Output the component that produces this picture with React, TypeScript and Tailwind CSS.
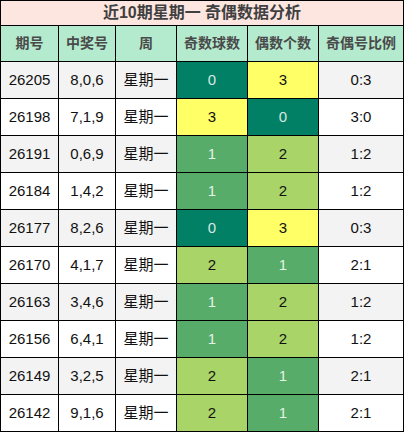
const rows = [
  ['26205', '8,0,6', 0, 3],
  ['26198', '7,1,9', 3, 0],
  ['26191', '0,6,9', 1, 2],
  ['26184', '1,4,2', 1, 2],
  ['26177', '8,2,6', 0, 3],
  ['26170', '4,1,7', 2, 1],
  ['26163', '3,4,6', 1, 2],
  ['26156', '6,4,1', 1, 2],
  ['26149', '3,2,5', 2, 1],
  ['26142', '9,1,6', 2, 1],
] as const;

// colour per count value
const cellColor: Record<number, string> = {
  0: 'bg-[#018066] text-[#d8e8e0]',
  1: 'bg-[#56ac68] text-[#e6f0e6]',
  2: 'bg-[#a9d468] text-[#111]',
  3: 'bg-[#ffff66] text-[#111]',
};

const headers = ['期号', '中奖号', '周', '奇数球数', '偶数个数', '奇偶号比例'];

const App = () => {
  return (
    <div
      className="w-[404px] h-[432px] bg-black p-px grid gap-px grid-cols-[57px_56px_60px_70px_70px_84px] grid-rows-[24px_35px_repeat(10,36px)]"
      style={{ fontFamily: '"Liberation Sans", Arial, "Noto Sans CJK SC", sans-serif' }}
    >
      <div className="col-span-6 bg-[#fde6e0] flex items-center justify-center text-[16px] font-bold text-[#404040]">
        近10期星期一 奇偶数据分析
      </div>
      {headers.map((h) => (
        <div
          key={h}
          className="bg-[#b4ebce] flex items-center justify-center text-[14px] font-bold text-[#4a4a4a]"
        >
          {h}
        </div>
      ))}
      {rows.map(([issue, nums, odd, even], i) => {
        const bg = i % 2 === 0 ? 'bg-[#f3f3f3]' : 'bg-white';
        return [
          <div key={issue + 'a'} className={`${bg} flex items-center justify-center text-[15px] text-[#111]`}>{issue}</div>,
          <div key={issue + 'b'} className={`${bg} flex items-center justify-center text-[15px] text-[#111]`}>{nums}</div>,
          <div key={issue + 'c'} className={`${bg} flex items-center justify-center text-[15px] text-[#111]`}>星期一</div>,
          <div key={issue + 'd'} className={`${cellColor[odd]} flex items-center justify-center text-[15px]`}>{odd}</div>,
          <div key={issue + 'e'} className={`${cellColor[even]} flex items-center justify-center text-[15px]`}>{even}</div>,
          <div key={issue + 'f'} className={`${bg} flex items-center justify-center text-[15px] text-[#111]`}>{odd}:{even}</div>,
        ];
      })}
    </div>
  );
};

export default App;
